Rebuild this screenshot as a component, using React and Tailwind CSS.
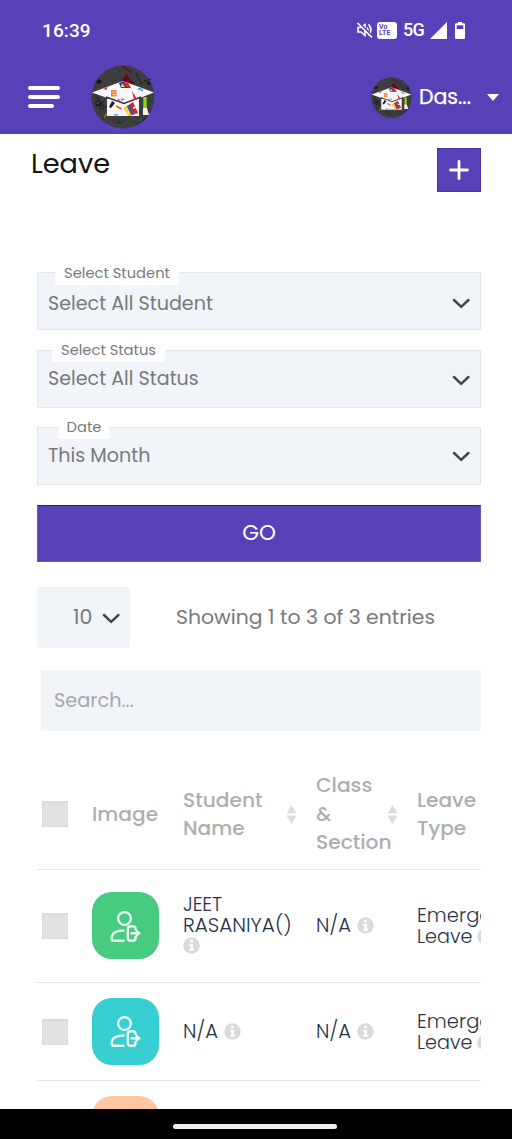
import React from "react";

const rootFont = "font-['Poppins','Inter','Noto_Sans',sans-serif]";

function Logo({ className }) {
  return (
    <svg className={className} viewBox="0 0 64 64" aria-hidden="true">
      <circle cx="32" cy="32" r="31.5" fill="#3d3d3f" />
      <path d="M35 9 44 19 29 19Z" fill="#650c12" />
      <path d="m31 1 10 7M54 42l4 4" stroke="#65131e" strokeWidth="1.6" />
      <path d="m45 8 6 11M53 16l7-2M57 49l-6 8M25 57l5 2M5 32l4 2" stroke="#1d1d20" strokeWidth="1" />
      <circle cx="24" cy="6" r="1.5" fill="#12624f" />
      <path d="m7 14 4 2-2 3-4-1zM55 18l4-2v5z" fill="#171719" />
      <path d="m12 55 7-12M22 56l4-9" stroke="#66172a" strokeWidth="1.5" />
      <path d="m13 53 3-5" stroke="#927317" strokeWidth="1.5" />
      <circle cx="7" cy="38" r="2.4" fill="none" stroke="#151517" />
      <circle cx="11" cy="42" r="2.2" fill="none" stroke="#151517" />
      <path d="m5 41 8-4" stroke="#151517" />
      <path d="m27 54 3 4 3-3M43 57l3 2 3-2" fill="none" stroke="#113d39" strokeWidth="1.2" />
      <path d="M16 34h32v17H16Z" fill="#f2f6f8" />
      <path d="M1 27.500 32 16 63 27.500 33 39Z" fill="#f6f7f9" />
      <path d="M15 32 33 38.500 50 32" fill="none" stroke="#333a45" strokeWidth="1.5" />
      <path d="m28 18 5-2 7 7H30Z" fill="#1431df" />
      <path d="m32 17 5 1 3 5-5-1Z" fill="#e91d23" />
      <path d="m31 18 3 4h-4Z" fill="#ffe31c" />
      <rect x="20" y="25" width="5.5" height="6.5" fill="#f5822b" />
      <path d="M21.5 27h3m-3 2.5h3" stroke="#fff" strokeWidth=".7" />
      <path d="m12 24 5-2-2 3zM41 26l5 8-3 1z" fill="#d9284b" />
      <path d="m47 24 5 2-2-3z" fill="none" stroke="#4a8ee4" />
      <path d="m27 34 2 2M30 35l3-1" stroke="#e04aa0" strokeWidth="1.5" />
      <path d="m18 42 3-6 3 2-4 5z" fill="#1b1b1e" />
      <path d="m25 40 6 3-1 2-5-3z" fill="#f26a23" />
      <path d="m33 43 9-6 5 11-9 3z" fill="#e5221c" />
      <path d="m33 43 3-2 4 9-2 1z" fill="#ffe11b" />
      <path d="m36 41 3-1 4 9-2 1z" fill="#2458d8" />
      <path d="m42 43 4-1" stroke="#fff" strokeWidth="1.5" />
      <path d="M22 49h6l-3 2z" fill="#6ca5e9" />
      <path d="M54 32v12" stroke="#91d613" strokeWidth="3.4" />
      <path d="m52 43h4l2 7h-6z" fill="#eef5e9" />
    </svg>
  );
}

function StatusIcons() {
  return (
    <div className="flex items-center text-white">
      <svg className="h-[18px] w-[18px]" viewBox="0 0 18 18" fill="none" stroke="currentColor" strokeWidth="1.6">
        <path d="M2 6.500h3l4-3v11l-4-3.500H2z" />
        <path d="M11 6.500q2 2.500 0 5M12.500 3.300q5 5.500 0 11.200" />
        <path d="M2.500 1.200 17 16" stroke="#5840b8" strokeWidth="2" />
        <path d="M1.500 2 16 16.500" />
      </svg>
      <div className="ml-[3px] h-[17px] w-[20px] rounded-[3px] bg-white pl-[2px] pt-[2px] font-['Roboto',sans-serif] text-[7px] font-bold leading-[6.500px] text-[#5840b8]">
        <div>Vo</div>
        <div>LTE</div>
      </div>
      <span className="ml-[6px] font-['Roboto',sans-serif] text-[18px] font-medium leading-none tracking-[-0.8px]">5G</span>
      <svg className="ml-[6px] h-[17px] w-[17px]" viewBox="0 0 17 17"><path d="M17 0v17H0z" fill="currentColor" /></svg>
      <svg className="ml-[8px] h-[17px] w-[10px]" viewBox="0 0 10 17">
        <path d="M3 0h4v1.300h2q1 0 1 1V16q0 1-1 1H1q-1 0-1-1V2.300q0-1 1-1h2z" fill="currentColor" />
        <path d="M1.700 3.300h6.600v3.700H1.700z" fill="#5840b8" />
      </svg>
    </div>
  );
}

function Chevron({ className }) {
  return (
    <svg className={className} viewBox="0 0 18 12" fill="none" stroke="#444749" strokeWidth="2.500" strokeLinecap="round" strokeLinejoin="miter">
      <path d="M2 2 9.200 8.800 16.400 2" />
    </svg>
  );
}

function Field({ label, value, labelClass, valueClass, chevronClass, className }) {
  return (
    <div className={`relative flex h-[58px] w-[444px] justify-between border border-[#e3e5e9] bg-[#f1f5fa] pl-[10px] pr-[10px] ${className}`}>
      <span className={`absolute flex h-[24px] items-center justify-center whitespace-nowrap bg-white text-[14.700px] leading-none text-[#77797c] ${labelClass}`}>{label}</span>
      <span className={`whitespace-nowrap text-[19.100px] leading-[28px] text-[#77797c] ${valueClass}`}>{value}</span>
      <Chevron className={`h-[12px] w-[18px] ${chevronClass}`} />
    </div>
  );
}

function Check() {
  return <div className="h-[26px] w-[26px] border border-t-2 border-[#dadbde] bg-[#e1e2e4]" />;
}

function Sort() {
  return (
    <svg className="h-[19px] w-[11px] shrink-0" viewBox="0 0 11 19" fill="#dcdcdd">
      <path d="M5.500 0 10.500 8.500H.5zM.5 10.500h10L5.500 19z" />
    </svg>
  );
}

function Info({ className = "inline-block" }) {
  return (
    <svg className={`h-[17px] w-[17px] shrink-0 ${className}`} viewBox="0 0 17 17">
      <circle cx="8.500" cy="8.500" r="8.200" fill="#dadadb" />
      <path d="M7.200 2.800h2.700v2.400H7.200zM6 6.800h4v5.300h1.200v1.700H6v-1.700h1.300V8.500H6z" fill="white" />
    </svg>
  );
}

function Avatar({ className }) {
  return (
    <div className={`-mt-px flex h-[67px] w-[67px] shrink-0 items-center justify-center rounded-[20px] ${className}`}>
      <svg className="h-[34px] w-[34px]" viewBox="0 0 34 34" fill="none" stroke="#e9fdf5" strokeWidth="2.400" strokeLinejoin="round">
        <circle cx="15.500" cy="9.500" r="6.400" />
        <path d="M15.500 21.500C8 21.500 3.500 23.500 2.800 27.500V30q0 1.800 1.800 1.800h10.900" />
        <path d="M26.500 21v-1.500q0-2.300-2.700-2.300h-2q-3 0-3 2.800v9q0 2.800 3 2.800h2q2.700 0 2.700-2.300V27M21.500 24.200h7" />
        <path d="m27 20.500 4.500 3.700-4.500 3.700z" fill="#e9fdf5" strokeWidth="1" />
      </svg>
    </div>
  );
}

const cols = "grid w-[444px] grid-cols-[50px_91px_133px_101px_64px] items-center overflow-hidden pl-[5px]";

function Row({ color, name, wide, className }) {
  return (
    <div className={`${cols} border-b border-[#e4e5e7] text-[19.500px] font-light leading-[21px] text-[#27324a] ${className}`}>
      <Check />
      <Avatar className={color} />
      {wide ? (
        <div className="-mt-[5px]">
          <div className="text-[19.500px] tracking-[-0.100px]">JEET</div>
          <div className="text-[20px]">{name}</div>
          <Info className="mt-px block" />
        </div>
      ) : (
        <div className="-mt-px flex items-center gap-[6px]"><span className="tracking-[0.100px]">{name}</span><Info /></div>
      )}
      <div className="-mt-px flex items-center gap-[6px]"><span className="tracking-[0.100px]">N/A</span><Info /></div>
      <div className="w-[110px]">
        <div className="tracking-[0.050px]">Emergency</div>
        <div className="flex items-center gap-[5px]"><span className="text-[19.200px]">Leave</span><Info /></div>
      </div>
    </div>
  );
}

export default function App() {
  return (
    <div className={`flex h-[1139px] w-[512px] flex-col overflow-hidden bg-white ${rootFont}`}>
      <header className="h-[134px] shrink-0 bg-[#5840b8] text-white">
        <div className="flex h-[60px] items-center justify-between pl-[42px] pr-[47px]">
          <span className="font-['Roboto',sans-serif] text-[19px] font-medium leading-none tracking-[0.1px]">16:39</span>
          <StatusIcons />
        </div>
        <div className="flex h-[74px] items-center pl-[28px]">
          <div className="flex w-[32px] flex-col gap-[5px]">
            <i className="h-[4px] w-[32px] rounded-full bg-white" />
            <i className="h-[4px] w-[32px] rounded-full bg-white" />
            <i className="h-[4px] w-[26px] rounded-full bg-white" />
          </div>
          <Logo className="ml-[31px] h-[64px] w-[64px]" />
          <Logo className="ml-[216px] h-[41px] w-[41px]" />
          <span className="ml-[7px] w-[53px] whitespace-nowrap text-[20.500px] font-normal leading-none [-webkit-text-stroke:0.25px_white]">Das...</span>
          <svg className="ml-[15px] h-[7px] w-[12px]" viewBox="0 0 12 7"><path d="M0 0h12L6 7z" fill="white" /></svg>
        </div>
      </header>

      <main className="flex h-[975px] shrink-0 flex-col overflow-hidden pl-[37px]">
        <div className="ml-[-6px] mt-[14px] flex h-[44px] w-[450px] shrink-0 justify-between">
          <h1 className="text-[27.200px] font-normal leading-[32px] text-[#151515]">Leave</h1>
          <button className="flex h-[44px] w-[44px] items-center justify-center border border-[#4b2fb4] bg-[#5840b8]">
            <svg className="h-[20px] w-[20px]" viewBox="0 0 20 20" stroke="white" strokeWidth="2.800" strokeLinecap="round"><path d="M10 1.500v17M1.500 10h17" /></svg>
          </button>
        </div>

        <Field label="Select Student" value="Select All Student" className="mt-[80px] shrink-0" labelClass="top-[-12px] left-[17px] w-[124px]" valueClass="mt-[17px]" chevronClass="mt-[25px]" />
        <Field label="Select Status" value="Select All Status" className="mt-[20px] shrink-0" labelClass="top-[-13px] left-[14px] w-[113px]" valueClass="mt-[14px]" chevronClass="mt-[24px]" />
        <Field label="Date" value="This Month" className="mt-[19px] shrink-0" labelClass="top-[-13px] left-[20px] w-[52px]" valueClass="mt-[14px]" chevronClass="mt-[23px]" />

        <button className="mt-[20px] flex h-[57px] w-[444px] shrink-0 items-center justify-center border border-[#6f58c6] border-t-[#3b10b0] bg-[#5840b8] pb-[2px] text-[21.500px] leading-none text-white">GO</button>

        <div className="mt-[25px] flex h-[61px] shrink-0 items-center text-[20.400px] text-[#77797c]">
          <div className="flex h-[61px] w-[93px] items-center bg-[#f1f5fa] pl-[36px]">
            <span className="-mt-px w-[21px]">10</span>
            <Chevron className="ml-[8px] mt-[3px] h-[12px] w-[18px]" />
          </div>
          <span className="-mt-px ml-[46px] whitespace-nowrap">Showing 1 to 3 of 3 entries</span>
        </div>

        <div className="ml-[4px] mt-[22px] flex h-[61px] w-[440px] shrink-0 items-center bg-[#f1f5fa] pl-[13px] pt-px text-[19.300px] text-[#a6a7aa]">Search...</div>

        <div className={`${cols} mt-[28px] h-[111px] shrink-0 border-b border-[#e4e5e7] text-[20.200px] font-medium leading-[28.500px] text-[#acaeb0]`}>
          <Check />
          <span>Image</span>
          <div className="flex items-center justify-between pr-[19px]"><span>Student<br />Name</span><Sort /></div>
          <div className="flex items-center justify-between pr-[19px]"><span className="w-[70px]">Class<br />&amp;<br />Section</span><Sort /></div>
          <span>Leave<br />Type</span>
        </div>
        <Row color="bg-[#46cb80]" name="RASANIYA()" wide className="h-[113px] shrink-0" />
        <Row color="bg-[#38cfd2]" name="N/A" className="h-[98px] shrink-0" />
        <div className={`${cols} h-[98px] shrink-0`}>
          <span />
          <Avatar className="bg-[#fec7a2]" />
        </div>
      </main>

      <footer className="flex h-[30px] shrink-0 items-center justify-center bg-black pt-[5px] pr-[2px]">
        <div className="h-[5px] w-[164px] rounded-full bg-[#eeeeee]" />
      </footer>
    </div>
  );
}
